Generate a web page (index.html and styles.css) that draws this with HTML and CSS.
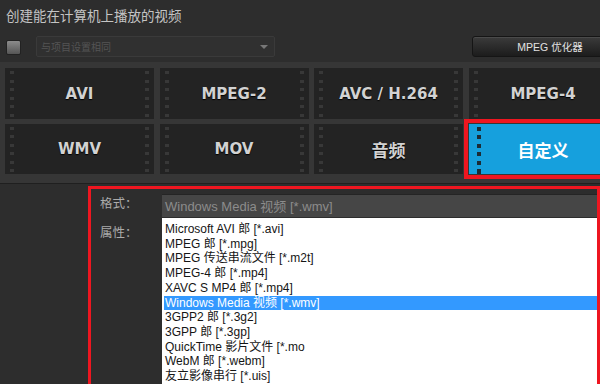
FILE: index.html
```html
<!DOCTYPE html>
<html lang="zh">
<head>
  <meta charset="UTF-8" />
  <title>创建能在计算机上播放的视频</title>
  <link rel="stylesheet" href="styles.css">
</head>
<body>
  <div class="title">创建能在计算机上播放的视频</div>

  <div class="toolbar">
    <span class="check"></span>
    <div class="preset">
      <span>与项目设置相同</span>
      <span class="caret"></span>
    </div>
    <button class="optimizer">MPEG 优化器</button>
  </div>

  <div class="formats">
    <div class="tile">AVI</div>
    <div class="tile">MPEG-2</div>
    <div class="tile">AVC / H.264</div>
    <div class="tile">MPEG-4</div>
    <div class="tile">WMV</div>
    <div class="tile">MOV</div>
    <div class="tile cjk">音频</div>
    <div class="tile cjk selected">自定义</div>
  </div>

  <div class="detail">
    <div class="label first">格式：</div>
    <div class="current">Windows Media 视频 [*.wmv]</div>
    <div class="label">属性：</div>
    <ul class="list">
      <li>Microsoft AVI 郎 [*.avi]</li>
      <li>MPEG 郎 [*.mpg]</li>
      <li>MPEG 传送串流文件 [*.m2t]</li>
      <li>MPEG-4 郎 [*.mp4]</li>
      <li>XAVC S MP4 郎 [*.mp4]</li>
      <li class="active">Windows Media 视频 [*.wmv]</li>
      <li>3GPP2 郎 [*.3g2]</li>
      <li>3GPP 郎 [*.3gp]</li>
      <li>QuickTime 影片文件 [*.mo</li>
      <li>WebM 郎 [*.webm]</li>
      <li>友立影像串行 [*.uis]</li>
    </ul>
  </div>
</body>
</html>
```

FILE: styles.css
```css
body {
  margin: 0;
  width: 600px;
  height: 384px;
  overflow: hidden;
  background-color: #2d2d2d;
  font-family: "Liberation Sans", "Noto Sans CJK SC", sans-serif;
}
.title {
  padding: 8px 0 0 6px;
  font-size: 13.5px;
  line-height: 18px;
  color: #c4c4c4;
}
.toolbar {
  display: flex;
  align-items: center;
  margin-top: 10px;
  height: 21px;
}
.check {
  flex: none;
  width: 13px;
  height: 13px;
  margin-left: 6px;
  margin-top: 2px;
  border: 1px solid #222;
  border-radius: 2px;
  background: linear-gradient(#8c8c8c, #555);
}
.preset {
  flex: none;
  display: flex;
  align-items: center;
  justify-content: space-between;
  box-sizing: border-box;
  width: 239px;
  height: 21px;
  margin-left: 15px;
  padding: 0 6px 0 4px;
  background-color: #303030;
  border: 1px solid #3a3a3a;
  border-radius: 2px;
  font-size: 10px;
  color: #545454;
}
.caret {
  width: 0;
  height: 0;
  border-left: 4px solid transparent;
  border-right: 4px solid transparent;
  border-top: 4px solid #777;
}
.optimizer {
  flex: none;
  box-sizing: border-box;
  width: 156px;
  height: 21px;
  margin-left: 197px;
  background: linear-gradient(#3b3b3b, #1c1c1c);
  border: 1px solid #151515;
  border-radius: 3px;
  box-shadow: inset 0 1px 0 #4a4a4a;
  font-family: "Liberation Sans", "Noto Sans CJK SC", sans-serif;
  font-size: 10.5px;
  color: #e2e2e2;
}
.formats {
  display: grid;
  grid-template-columns: repeat(4, 149px);
  grid-template-rows: 51px 50px;
  gap: 5px 5.5px;
  margin-top: 5px;
  padding: 6px 0 9px 5px;
  background-color: #363636;
  border-bottom: 1px solid #1f1f1f;
}
.tile {
  position: relative;
  display: flex;
  align-items: center;
  justify-content: center;
  background-color: #232323;
  font-family: "DejaVu Sans", sans-serif;
  font-weight: bold;
  font-size: 15px;
  color: #d2d2d2;
  text-shadow: 0 1px 1px #000;
}
.tile::before,
.tile::after {
  content: "";
  position: absolute;
  top: 3px;
  bottom: 0;
  width: 4px;
  background: repeating-linear-gradient(#383838 0 3px, transparent 3px 8.5px);
}
.tile::before { left: 5px; }
.tile::after { right: 5px; }
.cjk {
  font-family: "Noto Sans CJK SC", sans-serif;
  font-size: 17px;
}
.selected {
  background-color: #16a0dd;
  color: #fff;
  text-shadow: none;
  outline: 4px solid #ee1620;
  outline-offset: 1px;
}
.selected::before {
  left: 8px;
  background: repeating-linear-gradient(#1c2c36 0 4px, transparent 4px 8.5px);
}
.selected::after { display: none; }
.detail {
  display: grid;
  grid-template-columns: 62px 1fr;
  grid-template-rows: 23px 1fr;
  row-gap: 1px;
  box-sizing: border-box;
  width: 512px;
  height: 210px;
  margin: 2px 0 0 88px;
  padding: 5px 0 0 9px;
  border: 3px solid #ee1620;
  border-right-width: 3px;
}
.label {
  padding-top: 6px;
  font-family: "Noto Sans CJK SC", sans-serif;
  font-size: 12.5px;
  line-height: 16px;
  color: #ababab;
}
.label.first { padding-top: 1px; }
.current {
  padding: 1px 0 0 3px;
  background-color: #464646;
  border-top: 1px solid #252525;
  font-size: 13px;
  line-height: 21px;
  color: #8c8c8c;
}
.list {
  margin: 0;
  padding: 4px 0 0 2px;
  list-style: none;
  background-color: #fff;
  font-size: 12px;
  line-height: 14.7px;
  color: #151515;
}
.list li { padding-left: 1px; }
.list .active {
  background-color: #3399ff;
  color: #fff;
}
```
